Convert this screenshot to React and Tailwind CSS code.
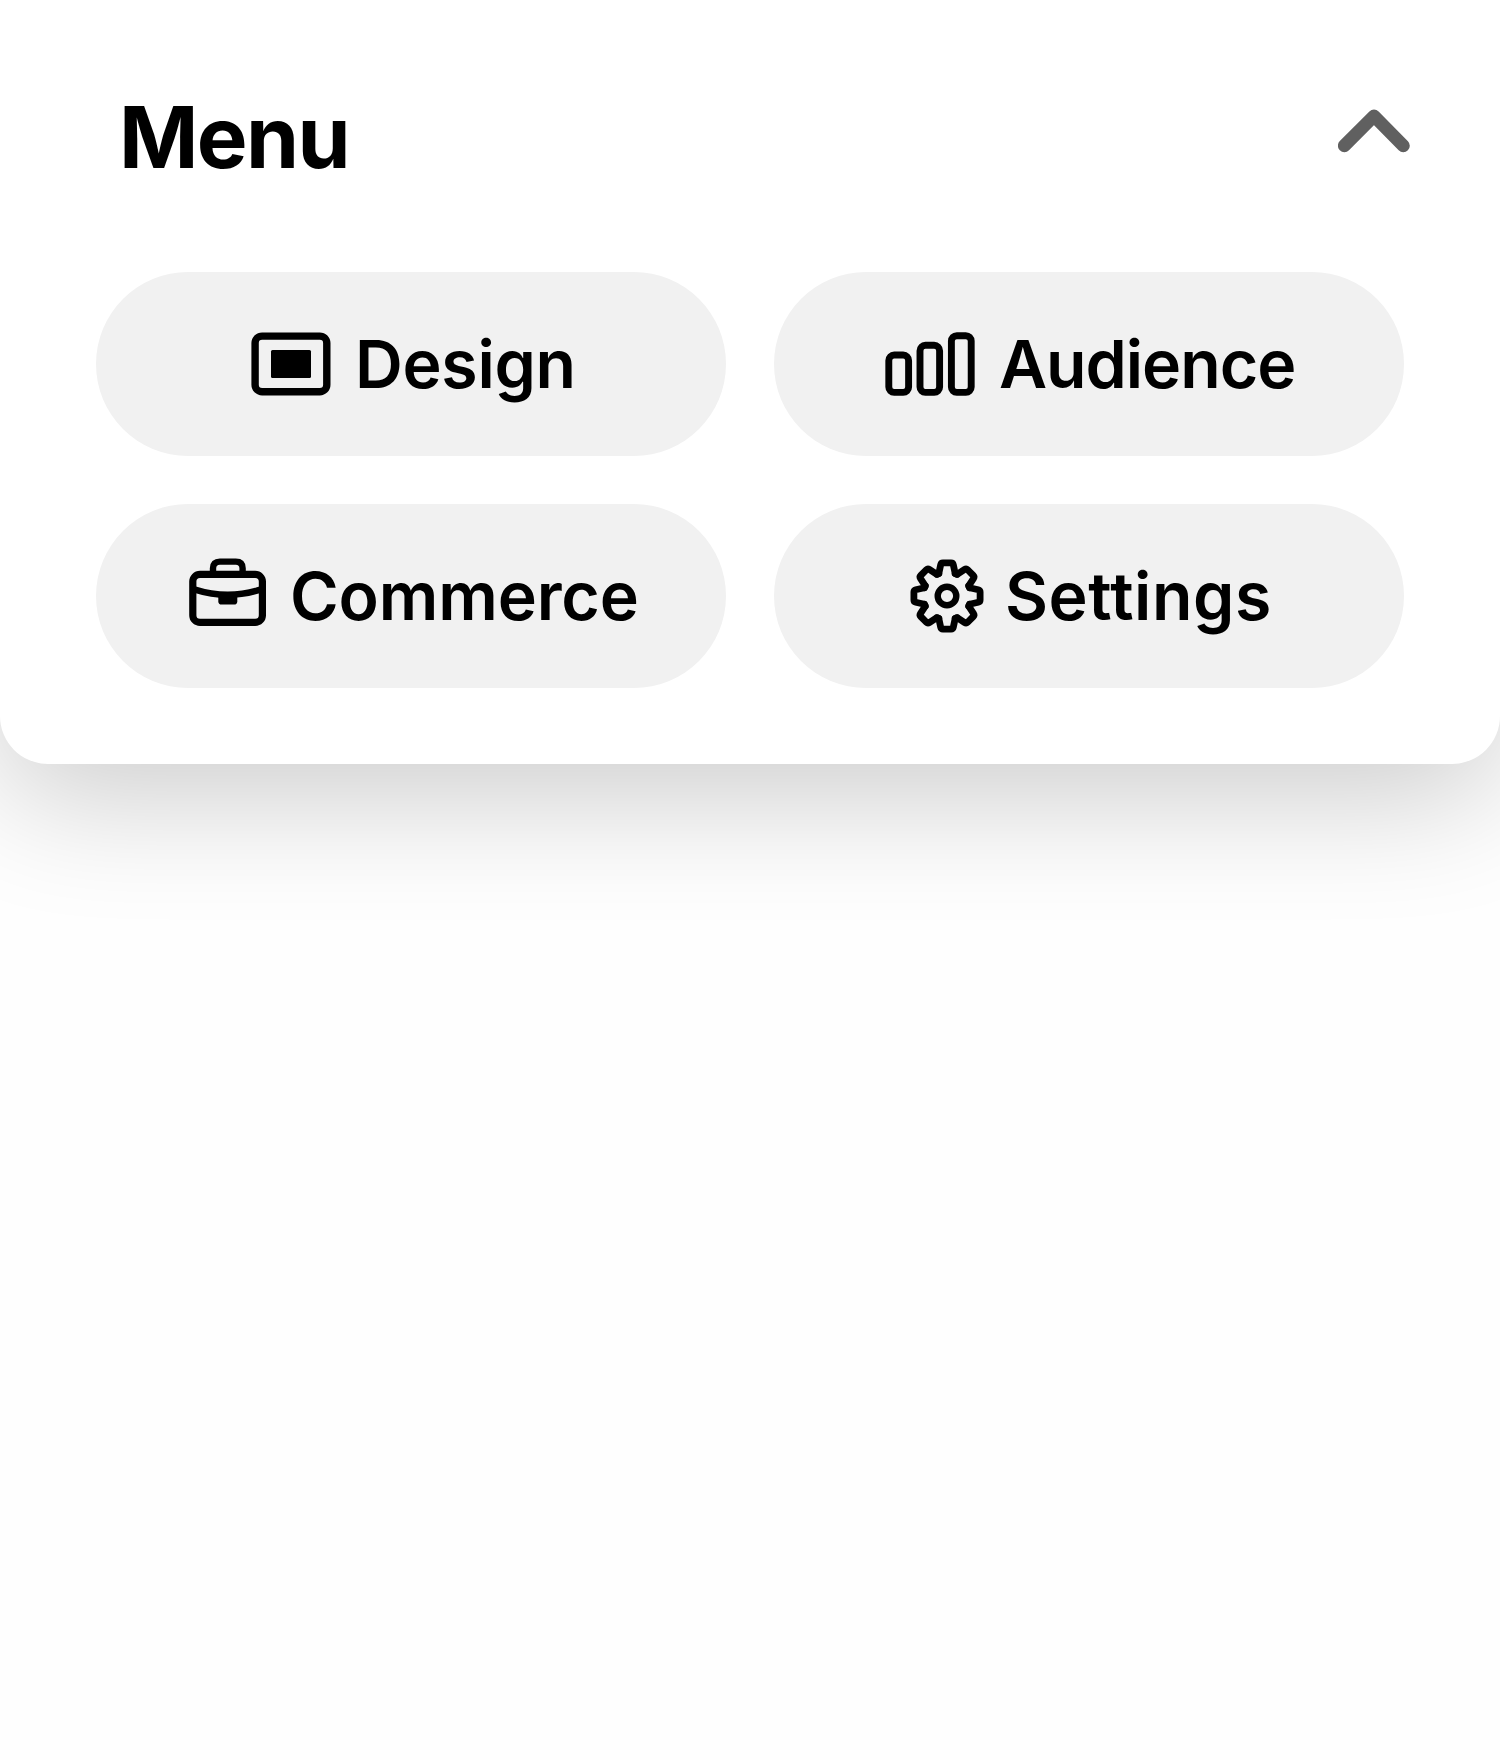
import React from "react";

const GEAR_TEETH = [0, 45, 90, 135, 180, 225, 270, 315];

function DesignIcon() {
  return (
    <svg className="h-20 w-20 shrink-0" viewBox="0 0 80 80" fill="none" aria-hidden="true">
      <rect x="4.1" y="12.1" width="71.7" height="55.7" rx="7" stroke="currentColor" strokeWidth="7.4" />
      <rect x="20" y="26" width="40" height="28" rx="1.5" fill="currentColor" />
    </svg>
  );
}

function AudienceIcon() {
  return (
    <svg className="h-20 w-[90px] shrink-0" viewBox="0 0 90 80" fill="none" stroke="currentColor" strokeWidth="6.9" aria-hidden="true">
      <rect x="3.8" y="31" width="19.8" height="37.4" rx="5.4" />
      <rect x="35" y="21.3" width="19.6" height="47.1" rx="5.4" />
      <rect x="66.4" y="11.7" width="19.8" height="56.7" rx="5.4" />
    </svg>
  );
}

function CommerceIcon() {
  return (
    <svg className="h-20 w-[77px] shrink-0" viewBox="0 0 77 80" fill="none" stroke="currentColor" aria-hidden="true">
      <rect x="3.8" y="18.4" width="69.6" height="48" rx="7.2" strokeWidth="7.2" />
      <path d="M24 17.5V12.3Q24 5.6 30.8 5.6H46.8Q53.6 5.6 53.6 12.3V17.5" strokeWidth="6.4" />
      <path d="M6 33.6Q38.8 44 71.5 33.6" strokeWidth="6.4" />
      <path d="M29.3 39H48.3V45.2Q48.3 48.6 44.9 48.6H32.7Q29.3 48.6 29.3 45.2Z" fill="currentColor" stroke="none" />
    </svg>
  );
}

function SettingsIcon() {
  return (
    <svg className="h-20 w-[74px] shrink-0" viewBox="-37 -40 74 80" fill="none" stroke="currentColor" strokeWidth="6.8" aria-hidden="true">
      <circle r="9.3" strokeWidth="6.4" />
      {GEAR_TEETH.map((angle) => (
        <path
          key={angle}
          transform={`rotate(${angle})`}
          strokeLinejoin="round"
          strokeLinecap="round"
          d="M-10.1 -21.7L-8.2 -22.5L-6.3 -31.3Q-5.9 -33.1 -4.1 -33.1H4.1Q5.9 -33.1 6.3 -31.3L8.2 -22.5L10.1 -21.7"
        />
      ))}
    </svg>
  );
}

function MenuButton({ icon, label, className, labelClass }) {
  return (
    <button type="button" className={`flex h-[184px] items-center rounded-full bg-[#f1f1f1] text-[66.2px] leading-[80px] font-semibold text-black ${className}`}>
      {icon}
      <span className={labelClass}>{label}</span>
    </button>
  );
}

export default function App() {
  return (
    <div className="h-[1760px] w-full overflow-hidden bg-[#fefefe] font-['Inter',sans-serif]">
      <section className="h-[764px] rounded-b-[48px] bg-white shadow-[0_32px_128px_rgba(0,0,0,0.2)]">
        <header className="flex h-[272px] items-start justify-between pt-[85px] pr-[90px] pl-[119px]">
          <h1 className="text-[85.3px] leading-[104px] font-bold tracking-[-1.6px] text-black">Menu</h1>
          <svg className="mt-[17px] h-[56px] w-[72px]" viewBox="0 0 72 56" fill="none" aria-hidden="true">
            <path d="M6.4 43.7L36 14L65.3 43.7" stroke="#606060" strokeWidth="13" strokeLinecap="round" strokeLinejoin="round" />
          </svg>
        </header>
        <nav className="grid grid-cols-2 gap-12 px-24">
          <MenuButton icon={<DesignIcon />} label="Design" className="pl-[155px]" labelClass="ml-6 tracking-[-0.3px]" />
          <MenuButton icon={<AudienceIcon />} label="Audience" className="pl-[111px]" labelClass="ml-6 tracking-[-1.05px]" />
          <MenuButton icon={<CommerceIcon />} label="Commerce" className="pl-[93px]" labelClass="ml-6 tracking-[-0.15px]" />
          <MenuButton icon={<SettingsIcon />} label="Settings" className="pl-[136px]" labelClass="ml-[21px] tracking-[0.55px]" />
        </nav>
      </section>
    </div>
  );
}
